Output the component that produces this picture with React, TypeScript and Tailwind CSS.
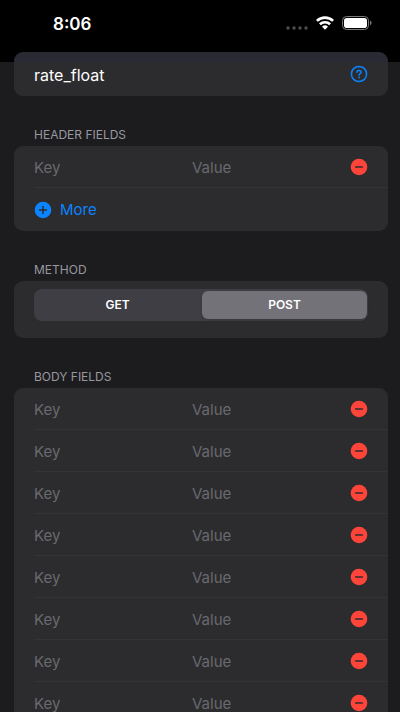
import { useState } from "react"
import { clsx } from "clsx"

type Method = "GET" | "POST"

const methods: Method[] = ["GET", "POST"]
const bodyRows = [1, 2, 3, 4, 5, 6, 7, 8]

function WifiIcon() {
  return (
    <svg width="18" height="14" viewBox="0 0 18 14" fill="none" stroke="#fff" strokeWidth="2.6" aria-hidden="true">
      <path d="M0.9 4.9A11.6 11.6 0 0 1 17.1 4.9" />
      <path d="M3.9 8.3A7.3 7.3 0 0 1 14.1 8.3" />
      <path d="M9 13.7L6 10.7A4.3 4.3 0 0 1 12 10.7Z" fill="#fff" stroke="none" />
    </svg>
  )
}

function BatteryIcon() {
  return (
    <svg width="30" height="14" viewBox="0 0 30 14" fill="none" aria-hidden="true">
      <rect x="0.5" y="0.5" width="26" height="13" rx="4" stroke="#7a7a7a" />
      <rect x="2" y="2" width="23" height="10" rx="2.8" fill="#fff" />
      <path d="M28 4.8V9.2C29 8.9 29.5 8 29.5 7C29.5 6 29 5.1 28 4.8Z" fill="#7a7a7a" />
    </svg>
  )
}

function SignalDots() {
  return (
    <svg width="22" height="4" viewBox="0 0 22 4" fill="#4e4e4e" aria-hidden="true">
      <circle cx="2" cy="2" r="1.7" />
      <circle cx="8" cy="2" r="1.7" />
      <circle cx="14" cy="2" r="1.7" />
      <circle cx="20" cy="2" r="1.7" />
    </svg>
  )
}

function HelpIcon() {
  return (
    <svg width="18" height="18" viewBox="0 0 18 18" fill="none" stroke="#0a84ff" aria-hidden="true">
      <circle cx="9" cy="9" r="7.6" strokeWidth="1.5" />
      <path d="M6.9 7.2C7 6 7.8 5.4 9 5.4C10.2 5.4 11.1 6.1 11.1 7.2C11.1 8.6 9.1 8.7 9.1 10.3" strokeWidth="1.5" strokeLinecap="round" />
      <circle cx="9.1" cy="12.4" r="0.9" fill="#0a84ff" stroke="none" />
    </svg>
  )
}

function MinusIcon() {
  return (
    <svg width="18" height="18" viewBox="0 0 18 18" aria-hidden="true">
      <circle cx="9" cy="9" r="8.3" fill="#ff453a" />
      <path d="M5.6 9H12.4" stroke="#2c2c2e" strokeWidth="1.5" strokeLinecap="round" />
    </svg>
  )
}

function PlusIcon() {
  return (
    <svg width="18" height="18" viewBox="0 0 18 18" aria-hidden="true">
      <circle cx="9" cy="9" r="8.3" fill="#0a84ff" />
      <path d="M5.6 9H12.4M9 5.6V12.4" stroke="#2c2c2e" strokeWidth="1.5" strokeLinecap="round" />
    </svg>
  )
}

function StatusBar() {
  return (
    <header className="flex h-[52px] shrink-0 items-start justify-between bg-black pt-4 pr-7 pl-[53px]">
      <span className="text-[17px] leading-4 font-semibold">8:06</span>
      <div className="flex items-start gap-2">
        <div className="pt-[10px]">
          <SignalDots />
        </div>
        <WifiIcon />
        <BatteryIcon />
      </div>
    </header>
  )
}

function FieldRow() {
  return (
    <div className="ml-5 border-b border-[#343437] pr-5 last:border-b-0">
      <div className="grid h-[41px] grid-cols-[1fr_1fr_auto] items-center">
        <input type="text" aria-label="Key" placeholder="Key" className="h-full w-full min-w-0 bg-transparent pt-px outline-none placeholder:text-[#69696e]" />
        <input type="text" aria-label="Value" placeholder="Value" className="h-full w-full min-w-0 bg-transparent pt-px outline-none placeholder:text-[#69696e]" />
        <button type="button" aria-label="Remove field">
          <MinusIcon />
        </button>
      </div>
    </div>
  )
}

function Section({ title, children }: { title: string; children: React.ReactNode }) {
  return (
    <section className="pt-8">
      <h2 className="mb-1 pl-5 text-[12px] leading-[14px] text-[#98989f]">{title}</h2>
      <div className="rounded-[9px] bg-[#2c2c2e]">{children}</div>
    </section>
  )
}

export default function App() {
  const [name, setName] = useState("rate_float")
  const [method, setMethod] = useState<Method>("POST")

  return (
    <div className="flex h-screen flex-col overflow-hidden bg-[#1c1c1e] font-['Inter','Liberation_Sans',sans-serif] text-[15px] leading-6 text-white">
      <StatusBar />
      <main className="min-h-0 flex-1 overflow-hidden bg-linear-to-b from-black from-[10px] to-[#1c1c1e] to-[10px] pr-3 pl-[14px]">
        <div className="flex h-11 items-center rounded-[9px] bg-linear-to-b from-[#2a2a35] from-[10px] to-[#2c2c2e] to-[10px] px-5">
          <input
            type="text"
            aria-label="Name"
            value={name}
            onChange={(e) => setName(e.target.value)}
            className="h-full min-w-0 flex-1 bg-transparent pt-px text-[16px] outline-none"
          />
          <button type="button" aria-label="Help">
            <HelpIcon />
          </button>
        </div>

        <Section title="HEADER FIELDS">
          <FieldRow />
          <div className="pl-5">
            <button type="button" className="flex h-[43px] items-center gap-2 text-[#0a84ff]">
              <PlusIcon />
              More
            </button>
          </div>
        </Section>

        <Section title="METHOD">
          <div className="px-5 pt-2 pb-[17px]">
            <div role="group" aria-label="Method" className="flex gap-[2px] rounded-lg bg-[#3f3e44] px-px py-[2px]">
              {methods.map((item) => (
                <button
                  key={item}
                  type="button"
                  aria-pressed={method === item}
                  onClick={() => setMethod(item)}
                  className={clsx(
                    "h-7 flex-1 rounded-md text-[12px] font-semibold",
                    method === item && "bg-[#737278] shadow-sm"
                  )}
                >
                  {item}
                </button>
              ))}
            </div>
          </div>
        </Section>

        <Section title="BODY FIELDS">
          {bodyRows.map((row) => (
            <FieldRow key={row} />
          ))}
        </Section>
      </main>
    </div>
  )
}
